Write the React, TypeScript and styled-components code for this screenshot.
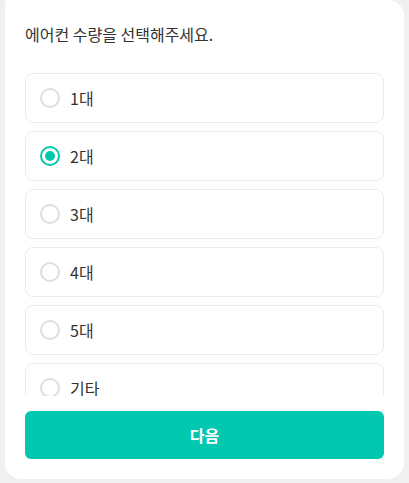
import React, { useState } from "react";
import styled, { createGlobalStyle } from "styled-components";

const Global = createGlobalStyle`
  html, body { margin: 0; padding: 0; background: #f0f0f0; }
  body { font-family: "Noto Sans CJK KR", "Noto Sans", sans-serif; }
  * { box-sizing: border-box; }
`;

const Page = styled.div`
  padding: 0 5px 5px;
`;

const Card = styled.div`
  background: #fff;
  border-radius: 3px 16px 16px 16px;
  padding: 20px;
  height: 479px;
  display: flex;
  flex-direction: column;
`;

const Title = styled.div`
  font-size: 16px;
  line-height: 28px;
  color: #333;
  margin-bottom: 25px;
`;

const List = styled.div`
  height: 323px;
  overflow: hidden;
  display: flex;
  flex-direction: column;
  gap: 8px;
`;

const Option = styled.label`
  flex: none;
  height: 50px;
  border: 1px solid #ececec;
  border-radius: 8px;
  display: flex;
  align-items: center;
  gap: 10px;
  padding-left: 14px;
  cursor: pointer;
  font-size: 16px;
  color: #333;
`;

const Radio = styled.span<{ $on: boolean }>`
  width: 20px;
  height: 20px;
  border-radius: 50%;
  border: 2px solid ${(p) => (p.$on ? "#02c8b0" : "#dedede")};
  display: flex;
  align-items: center;
  justify-content: center;
  &::after {
    content: "";
    width: 10px;
    height: 10px;
    border-radius: 50%;
    background: ${(p) => (p.$on ? "#02c8b0" : "transparent")};
  }
`;

const Button = styled.button`
  margin-top: 15px;
  height: 48px;
  border: none;
  border-radius: 6px;
  background: #02c8b0;
  color: #fff;
  font-family: inherit;
  font-size: 16px;
  font-weight: 700;
`;

const options = ["1대", "2대", "3대", "4대", "5대", "기타"];

export default function App() {
  const [sel, setSel] = useState("2대");
  return (
    <Page>
      <Global />
      <Card>
        <Title>에어컨 수량을 선택해주세요.</Title>
        <List>
          {options.map((o) => (
            <Option key={o} onClick={() => setSel(o)}>
              <Radio $on={sel === o} />
              {o}
            </Option>
          ))}
        </List>
        <Button>다음</Button>
      </Card>
    </Page>
  );
}
